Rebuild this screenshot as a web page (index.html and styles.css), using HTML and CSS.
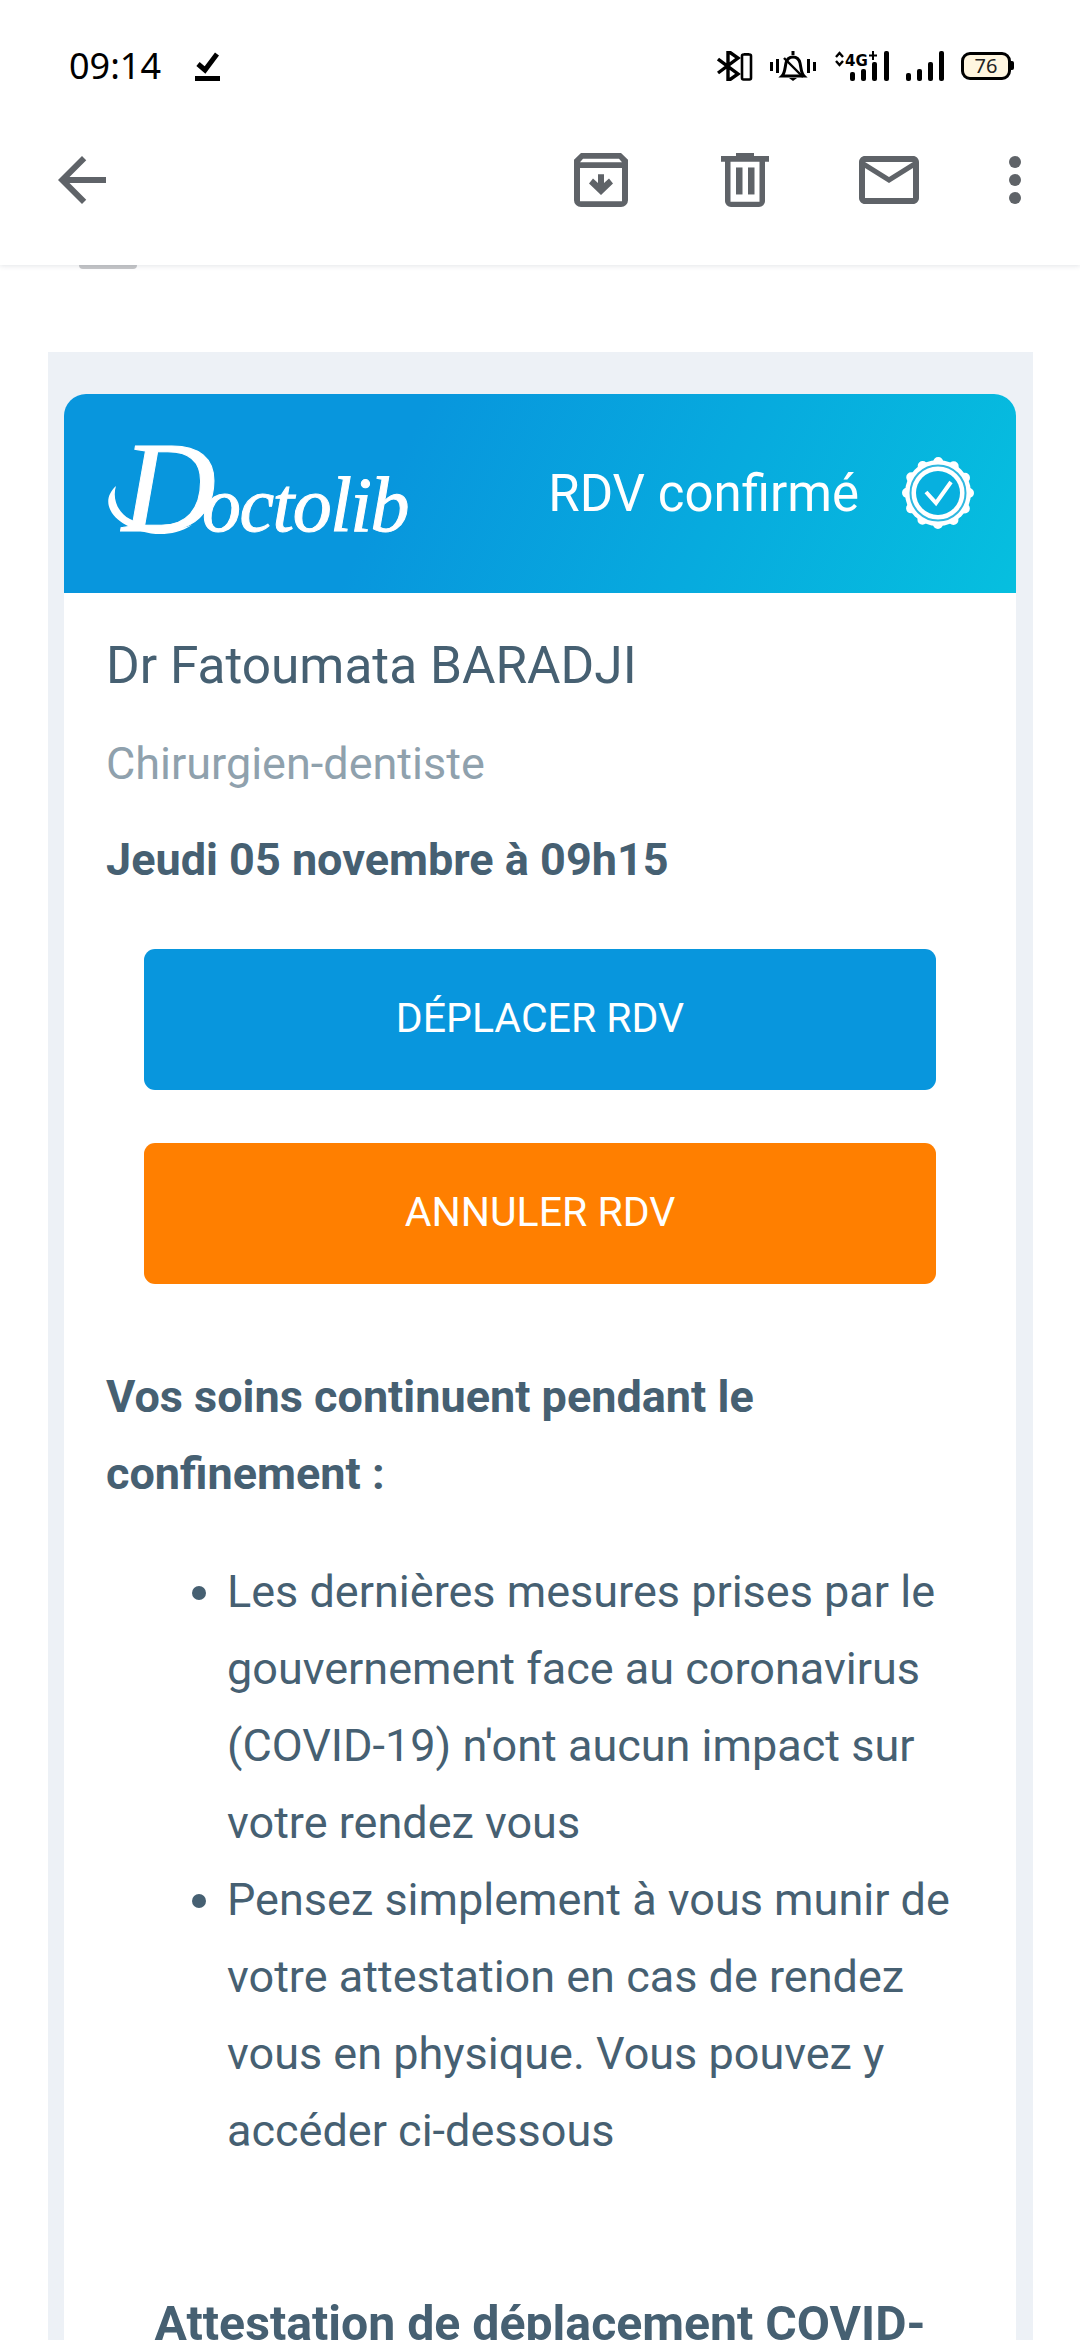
FILE: index.html
```html
<!DOCTYPE html>
<html lang="fr">
<head>
    <meta charset="UTF-8">
    <meta name="viewport" content="width=device-width, initial-scale=1.0">
    <title>Doctolib - RDV confirmé</title>
    <link rel="stylesheet" href="styles.css">
</head>
<body>
    <div class="phone">
        <!-- Status bar + toolbar -->
        <header class="app-bar">
            <div class="status-bar">
                <span class="time">09:14</span>
                <svg class="status-check" width="25" height="30" viewBox="0 0 25 30">
                    <path d="M3 13l7 6L22 3" fill="none" stroke="#000" stroke-width="5"/>
                    <rect x="0" y="25" width="25" height="5" fill="#000"/>
                </svg>
                <div class="status-icons">
                    <svg width="36" height="30" viewBox="0 0 36 30">
                        <path d="M1 8l20 15-10 7V0l10 7L1 22" fill="none" stroke="#000" stroke-width="3.4"/>
                        <rect x="25" y="3.5" width="9" height="25" rx="1.5" fill="none" stroke="#000" stroke-width="2.6"/>
                        <rect x="27" y="2" width="5" height="2" fill="#000"/>
                    </svg>
                    <svg width="46" height="30" viewBox="0 0 46 30">
                        <rect x="0" y="11" width="3" height="9" fill="#000"/>
                        <rect x="6" y="8" width="3" height="14" fill="#000"/>
                        <rect x="37" y="8" width="3" height="14" fill="#000"/>
                        <rect x="43" y="11" width="3" height="9" fill="#000"/>
                        <path d="M23 0v4M12 25c3-3 3-9 4-13 1-4 3-6 7-6s6 2 7 6c1 4 1 10 4 13z" fill="none" stroke="#000" stroke-width="3"/>
                        <path d="M14 7l19 19" stroke="#000" stroke-width="2.4"/>
                        <path d="M19 27h8l-4 3z" fill="#000"/>
                    </svg>
                    <svg width="56" height="30" viewBox="0 0 56 30">
                        <path d="M3 6l3.500-4L10 6M3 10l3.500 4L10 10" fill="none" stroke="#000" stroke-width="2.4"/>
                        <text class="net-label" x="12" y="15">4G</text>
                        <path d="M40 0v9M36 4.500h8" stroke="#000" stroke-width="2"/>
                        <rect x="17" y="21" width="5" height="9" rx="2" fill="#000"/>
                        <rect x="28" y="18" width="5" height="12" rx="2" fill="#000"/>
                        <rect x="39" y="11" width="5" height="19" rx="2" fill="#000"/>
                        <rect x="51" y="0" width="5" height="30" rx="2" fill="#000"/>
                    </svg>
                    <svg width="38" height="30" viewBox="0 0 38 30">
                        <rect x="0" y="22" width="5" height="8" rx="2" fill="#000"/>
                        <rect x="11" y="18" width="5" height="12" rx="2" fill="#000"/>
                        <rect x="22" y="11" width="5" height="19" rx="2" fill="#000"/>
                        <rect x="33" y="0" width="5" height="30" rx="2" fill="#000"/>
                    </svg>
                    <div class="battery"><span>76</span></div>
                </div>
            </div>
            <div class="toolbar">
                <svg class="back" width="48" height="48" viewBox="4 4 16 16">
                    <path fill="#5f6368" d="M20 11H7.830l5.590-5.590L12 4l-8 8 8 8 1.410-1.410L7.830 13H20v-2z"/>
                </svg>
                <div class="actions">
                    <div class="action">
                        <svg width="54" height="54" viewBox="0 0 54 56" preserveAspectRatio="none">
                            <path fill="#5f6368" fill-rule="evenodd" d="M7 0h40l7 7v42a7 7 0 0 1-7 7H7a7 7 0 0 1-7-7V7zM9 6L6 9.500h42L45 6zM6 15.500V50h42V15.500z"/>
                            <path fill="#5f6368" d="M24 22h6v9l5-4.500 4 5-12 12-12-12 4-5 5 4.500z"/>
                        </svg>
                    </div>
                    <div class="action">
                        <svg width="48" height="54" viewBox="0 0 48 56" preserveAspectRatio="none">
                            <path fill="#5f6368" fill-rule="evenodd" d="M15 0h18v3h15v6h-4v41a6 6 0 0 1-6 6H10a6 6 0 0 1-6-6V9H0V3h15zM9.500 9v41.500h29V9z"/>
                            <rect x="15" y="15" width="6.500" height="28" fill="#5f6368"/>
                            <rect x="27" y="15" width="6.500" height="28" fill="#5f6368"/>
                        </svg>
                    </div>
                    <div class="action">
                        <svg width="60" height="48" viewBox="2 4 20 16">
                            <path fill="#5f6368" d="M20 4H4c-1.100 0-2 .9-2 2v12c0 1.100.9 2 2 2h16c1.100 0 2-.9 2-2V6c0-1.100-.9-2-2-2zm0 14H4V8l8 5 8-5v10zm-8-7L4 6h16l-8 5z"/>
                        </svg>
                    </div>
                    <div class="dots">
                        <i></i><i></i><i></i>
                    </div>
                </div>
            </div>
        </header>

        <div class="scroll-stub"></div>

        <!-- Mail body -->
        <div class="mail">
            <div class="card">
                <div class="card-head">
                    <div class="logo">
                        <svg class="logo-swoosh" width="110" height="60" viewBox="0 0 110 60">
                            <path d="M10 3C-4 16 2 32 20 42c18 10 44 14 66 0C66 50 40 44 24 36 12 30 6 16 10 3z" fill="#fff"/>
                        </svg>
                        <span class="logo-d">D</span><span class="logo-rest">octolib</span>
                    </div>
                    <span class="head-title">RDV confirmé</span>
                    <svg class="badge" width="72" height="72" viewBox="-36 -36 72 72">
                        <circle r="33" fill="#fff"/>
                        <circle r="31" fill="none" stroke="#fff" stroke-width="10" stroke-dasharray="0 16.230" stroke-linecap="round"/>
                        <circle r="27.500" fill="none" stroke="#2fb8e0" stroke-width="2"/>
                        <circle r="22" fill="#07b0df"/>
                        <path d="M-12-1L-2 10 13-11" fill="none" stroke="#fff" stroke-width="4"/>
                    </svg>
                </div>
                <div class="card-body">
                    <h1 class="doctor">Dr Fatoumata BARADJI</h1>
                    <p class="speciality">Chirurgien-dentiste</p>
                    <p class="slot">Jeudi 05 novembre à 09h15</p>

                    <a class="btn btn-blue">DÉPLACER RDV</a>
                    <a class="btn btn-orange">ANNULER RDV</a>

                    <p class="lead">Vos soins continuent pendant le confinement :</p>
                    <ul class="notes">
                        <li>Les dernières mesures prises par le gouvernement face au coronavirus (COVID-19) n'ont aucun impact sur votre rendez vous</li>
                        <li>Pensez simplement à vous munir de votre attestation en cas de rendez vous en physique. Vous pouvez y accéder ci-dessous</li>
                    </ul>
                    <h2 class="attest">Attestation de déplacement COVID-</h2>
                </div>
            </div>
        </div>
    </div>
</body>
</html>
```
FILE: styles.css
```css
* {
    box-sizing: border-box;
}
html, body {
    margin: 0;
    padding: 0;
    background-color: #fff;
}
.phone {
    width: 1080px;
    height: 2340px;
    overflow: hidden;
    font-family: Roboto, Arial, sans-serif;
    color: #466072;
}

/* top bars */
.app-bar {
    position: relative;
    z-index: 2;
    height: 265px;
    background-color: #fff;
    box-shadow: 0 1px 5px rgba(60, 70, 90, 0.14);
}
.status-bar {
    display: flex;
    align-items: center;
    height: 95px;
    padding: 51px 69px 14px 69px;
}
.time {
    font-family: "Noto Sans", sans-serif;
    font-size: 36px;
    line-height: 30px;
    color: #000;
}
.status-check {
    margin-left: 34px;
}
.status-icons {
    display: flex;
    align-items: center;
    gap: 17px;
    margin-left: auto;
}
.net-label {
    font-family: "DejaVu Sans", sans-serif;
    font-size: 15px;
    font-weight: 700;
}
.battery {
    position: relative;
    width: 50px;
    height: 28px;
    border: 3.5px solid #000;
    border-radius: 9px;
    background-color: #fff6e0;
    font-family: "Noto Sans", sans-serif;
    font-size: 20px;
    line-height: 21px;
    color: #222;
    text-align: center;
}
.battery:after {
    content: "";
    position: absolute;
    right: -6px;
    top: 6px;
    width: 3px;
    height: 9px;
    background-color: #000;
    border-radius: 0 2px 2px 0;
}
.toolbar {
    display: flex;
    align-items: center;
    height: 170px;
    padding: 0 11px 0 58px;
}
.actions {
    display: flex;
    align-items: center;
    margin-left: auto;
}
.action {
    display: flex;
    justify-content: center;
    width: 144px;
}
.dots {
    display: flex;
    flex-direction: column;
    align-items: center;
    gap: 6px;
    width: 108px;
}
.dots i {
    display: block;
    width: 12px;
    height: 12px;
    border-radius: 50%;
    background-color: #5f6368;
}
.scroll-stub {
    width: 58px;
    height: 4px;
    margin-left: 79px;
    background-color: #c6c7c9;
    border-radius: 0 0 4px 4px;
}

/* mail */
.mail {
    margin: 83px 47px 0 48px;
    padding: 42px 17px 0 16px;
    background-color: #edf1f6;
}
.card {
    background-color: #fff;
    border-radius: 22px 22px 0 0;
}
.card-head {
    display: flex;
    align-items: center;
    height: 199px;
    padding: 0 42px;
    border-radius: 22px 22px 0 0;
    background: linear-gradient(115deg, #0896dd 35%, #06bfdf 100%);
    color: #fff;
}
.logo {
    position: relative;
    display: flex;
    align-items: baseline;
    width: 302px;
    font-family: "Liberation Serif", serif;
    font-style: italic;
    -webkit-text-stroke: 1px #fff;
}
.logo-swoosh {
    position: absolute;
    left: 0;
    top: 46px;
}
.logo-d {
    font-size: 130px;
    line-height: 100px;
    margin-left: 16px;
}
.logo-rest {
    font-size: 78px;
    letter-spacing: -1.500px;
    margin-left: -14px;
}
.head-title {
    margin-left: auto;
    font-size: 51px;
    font-weight: 400;
}
.badge {
    margin-left: 43px;
    margin-top: -2px;
}
.card-body {
    padding: 0 42px 60px 42px;
}
.doctor {
    margin: 40px 0 0;
    font-size: 51.400px;
    font-weight: 400;
    line-height: 66px;
}
.speciality {
    margin: 32px 0 0;
    font-size: 45px;
    line-height: 66px;
    color: #8fa1ad;
}
.slot {
    margin: 30px 0 0;
    font-size: 45px;
    font-weight: 700;
    line-height: 66px;
}
.btn {
    display: block;
    width: 792px;
    height: 141px;
    margin-left: 38px;
    border-radius: 11px;
    color: #fff;
    font-size: 41px;
    line-height: 138px;
    text-align: center;
}
.btn-blue {
    margin-top: 56px;
    background-color: #0896dd;
}
.btn-orange {
    margin-top: 53px;
    background-color: #ff7f00;
}
.lead {
    margin: 74px 0 0;
    font-size: 45px;
    font-weight: 700;
    line-height: 77px;
}
.notes {
    margin: 41px 0 0;
    padding: 0 0 0 121px;
    font-size: 45px;
    line-height: 77px;
}
.attest {
    margin: 122px 0 0;
    font-size: 48.200px;
    font-weight: 700;
    line-height: 66px;
    text-align: center;
}
```
